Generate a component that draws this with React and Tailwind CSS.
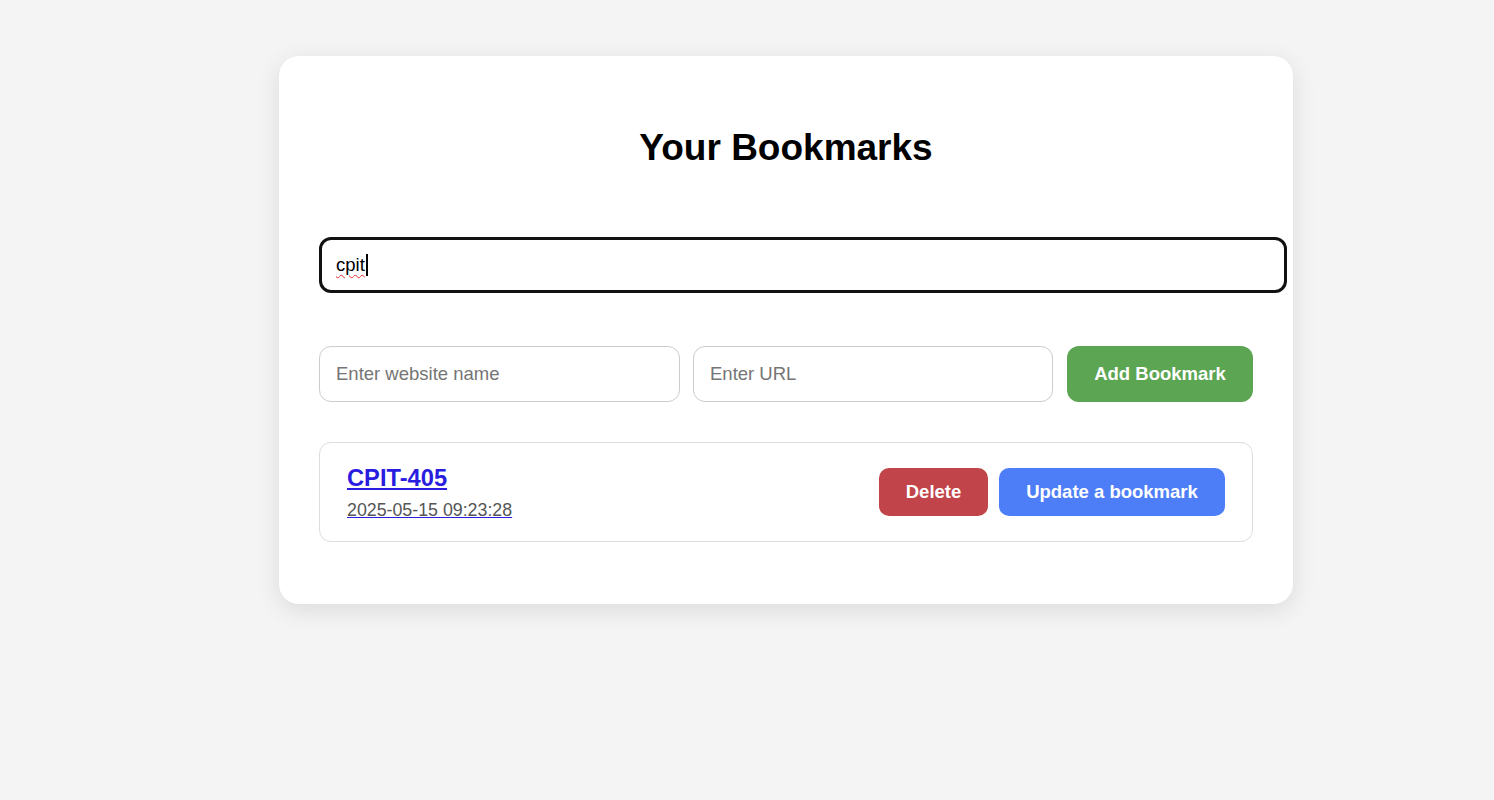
export default function App() {
  return (
    <div className="min-h-screen bg-[#f4f4f4] pt-[56px] pb-[196px] font-['Liberation_Sans',Arial,sans-serif]">
      <div className="ml-[279px] w-[1014px] rounded-[20px] bg-white px-[40px] pt-[40px] pb-[62px] shadow-[0_6px_24px_rgba(0,0,0,0.1)]">
        <h1 className="mt-[31px] text-center text-[37px] font-bold leading-[42px] text-black">
          Your Bookmarks
        </h1>

        <div className="mt-[68px] flex h-[56px] w-[968px] items-center rounded-[12px] border-[3px] border-[#111] bg-white pl-[14px] text-[18.5px] text-black">
          <span className="underline decoration-wavy decoration-[#e03030] decoration-1 underline-offset-[3px]">cpit</span>
          <span className="ml-[1px] h-[22px] w-[2px] bg-black" />
        </div>

        <div className="mt-[53px] flex items-center">
          <input
            type="text"
            placeholder="Enter website name"
            className="h-[56px] w-[361px] rounded-[12px] border border-[#cccccc] px-[16px] text-[18.5px] text-black outline-none placeholder:text-[#757575]"
          />
          <input
            type="text"
            placeholder="Enter URL"
            className="ml-[13px] h-[56px] w-[360px] rounded-[12px] border border-[#cccccc] px-[16px] text-[18.5px] text-black outline-none placeholder:text-[#757575]"
          />
          <button className="ml-[14px] h-[56px] w-[186px] rounded-[12px] bg-[#5ca553] text-[18.5px] font-bold text-white">
            Add Bookmark
          </button>
        </div>

        <div className="mt-[40px] flex h-[100px] items-center justify-between rounded-[12px] border border-[#dddddd] px-[27px]">
          <a href="#" className="flex flex-col items-start gap-[8px] text-[#2a1de0]">
            <span className="text-[23.7px] font-bold leading-[27px] underline decoration-[#2a1de0]">CPIT-405</span>
            <span className="text-[17.8px] leading-[20px] text-[#555555] underline decoration-[#2a1de0]">2025-05-15 09:23:28</span>
          </a>
          <div className="flex items-center gap-[11px]">
            <button className="h-[48px] w-[109px] rounded-[10px] bg-[#c1444a] text-[18.5px] font-bold text-white">
              Delete
            </button>
            <button className="h-[48px] w-[226px] rounded-[10px] bg-[#4d7ef7] text-[18.5px] font-bold text-white">
              Update a bookmark
            </button>
          </div>
        </div>
      </div>
    </div>
  )
}
